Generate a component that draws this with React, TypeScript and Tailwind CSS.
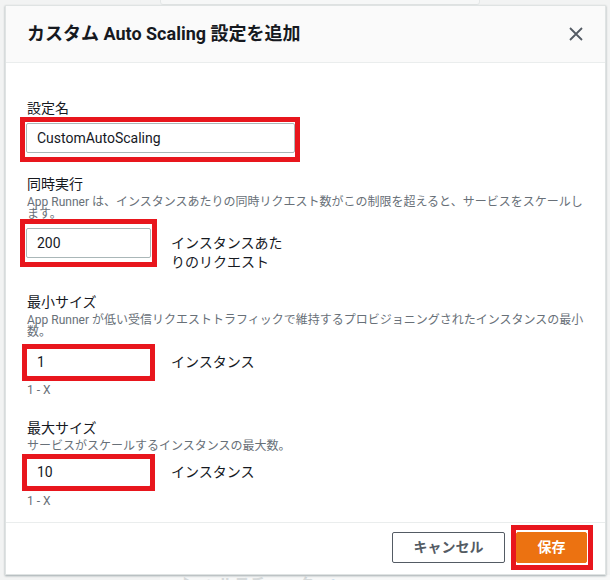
import type { ReactNode } from "react";

const font = "font-['Roboto','Noto_Sans_CJK_JP',sans-serif]";

function Mark({ className }: { className: string }) {
  // red annotation frame drawn over a control
  return <div className={`pointer-events-none absolute border-[5px] border-[#e8161d] ${className}`} />;
}

function Field({
  label,
  description,
  children,
  className = ""
}: {
  label: string;
  description?: ReactNode;
  children: ReactNode;
  className?: string;
}) {
  return (
    <div className={className}>
      <div className="pl-[1px] text-[14px] leading-[20px] text-[#16191f]">{label}</div>
      {description && (
        <div className="mt-[2px] pl-[1px] text-[12px] leading-[12px] text-[#687078]">{description}</div>
      )}
      {children}
    </div>
  );
}

function NumberRow({
  value,
  unit,
  mark,
  className = ""
}: {
  value: string;
  unit: ReactNode;
  mark: string;
  className?: string;
}) {
  return (
    <div className={`flex items-start gap-[20px] ${className}`}>
      <div className="relative">
        <div className="flex h-[30px] w-[125px] items-center rounded-[2px] border border-[#aab7b8] bg-white px-[10px] text-[14px] text-[#16191f]">
          {value}
        </div>
        <Mark className={mark} />
      </div>
      <div className="w-[120px] pt-[6px] text-[14px] leading-[19px] text-[#16191f]">{unit}</div>
    </div>
  );
}

export default function App() {
  return (
    <div className={`relative h-[580px] w-[610px] overflow-hidden bg-[#f2f3f3] ${font}`}>
      {/* page behind the dialog */}
      <div className="absolute left-[160px] top-[-10px] h-[15px] w-[320px] rounded-[3px] border border-[#e4e7e7] bg-[#f6f7f7]" />
      <div className="absolute left-[160px] top-[575px] flex h-[20px] w-[460px] items-start gap-[6px] bg-[#f7f8f8] pl-[22px] text-[16px] font-bold leading-[20px] text-[#d6dadb]">
        <span>▶ ヘルスチェック</span>
        <span className="text-[12px] font-normal text-[#cfe0ee]">Info</span>
      </div>

      <div className="relative ml-[5px] mt-[5px] w-[601px] border border-[#dfe3e3] bg-white shadow-[0_1px_2px_rgba(0,28,36,0.35)]">
        <header className="flex h-[57px] items-center justify-between border-b border-[#eaeded] bg-[#fafafa] pl-[21px] pr-[21px]">
          <h1 className="text-[18px] font-bold leading-[22px] text-[#16191f]">カスタム Auto Scaling 設定を追加</h1>
          <svg width="16" height="16" viewBox="0 0 16 16" className="text-[#545b64]">
            <path d="M2 2 L14 14 M14 2 L2 14" stroke="currentColor" strokeWidth="1.8" fill="none" />
          </svg>
        </header>

        <div className="pb-[14px] pl-[20px] pr-[12px] pt-[35px]">
          <Field label="設定名">
            <div className="relative mt-[5px] w-[269px]">
              <div className="flex h-[30px] items-center rounded-[2px] border border-[#aab7b8] bg-white px-[10px] text-[14px] text-[#16191f]">
                CustomAutoScaling
              </div>
              <Mark className="-bottom-[9px] -left-[6px] -right-[5px] -top-[6px]" />
            </div>
          </Field>

          <Field
            className="mt-[21px]"
            label="同時実行"
            description="App Runner は、インスタンスあたりの同時リクエスト数がこの制限を超えると、サービスをスケールします。"
          >
            <NumberRow
              className="mt-[8px]"
              value="200"
              unit="インスタンスあたりのリクエスト"
              mark="-bottom-[9px] -left-[6px] -right-[6px] -top-[9px]"
            />
          </Field>

          <Field
            className="mt-[20px]"
            label="最小サイズ"
            description="App Runner が低い受信リクエストトラフィックで維持するプロビジョニングされたインスタンスの最小数。"
          >
            <NumberRow
              className="mt-[9px]"
              value="1"
              unit="インスタンス"
              mark="-bottom-[4px] -left-[4px] -right-[4px] -top-[3px]"
            />
            <div className="mt-[6px] pl-[1px] text-[12px] leading-[14px] text-[#687078]">1 - X</div>
          </Field>

          <Field
            className="mt-[21px]"
            label="最大サイズ"
            description="サービスがスケールするインスタンスの最大数。"
          >
            <NumberRow
              className="mt-[5px]"
              value="10"
              unit="インスタンス"
              mark="-bottom-[4px] -left-[4px] -right-[4px] -top-[3px]"
            />
            <div className="mt-[7px] pl-[1px] text-[12px] leading-[14px] text-[#687078]">1 - X</div>
          </Field>
        </div>

        <footer className="flex justify-end gap-[11px] border-t border-[#eaeded] pb-[11px] pr-[18px] pt-[9px]">
          <button className="h-[31px] w-[113px] rounded-[2px] border border-[#545b64] bg-white text-[14px] font-bold text-[#545b64]">
            キャンセル
          </button>
          <div className="relative">
            <button className="h-[31px] w-[71px] rounded-[2px] border border-[#ec7211] bg-[#ec7211] text-[14px] font-bold text-white">
              保存
            </button>
            <Mark className="-bottom-[7px] -left-[5px] -right-[6px] -top-[7px]" />
          </div>
        </footer>
      </div>
    </div>
  );
}
